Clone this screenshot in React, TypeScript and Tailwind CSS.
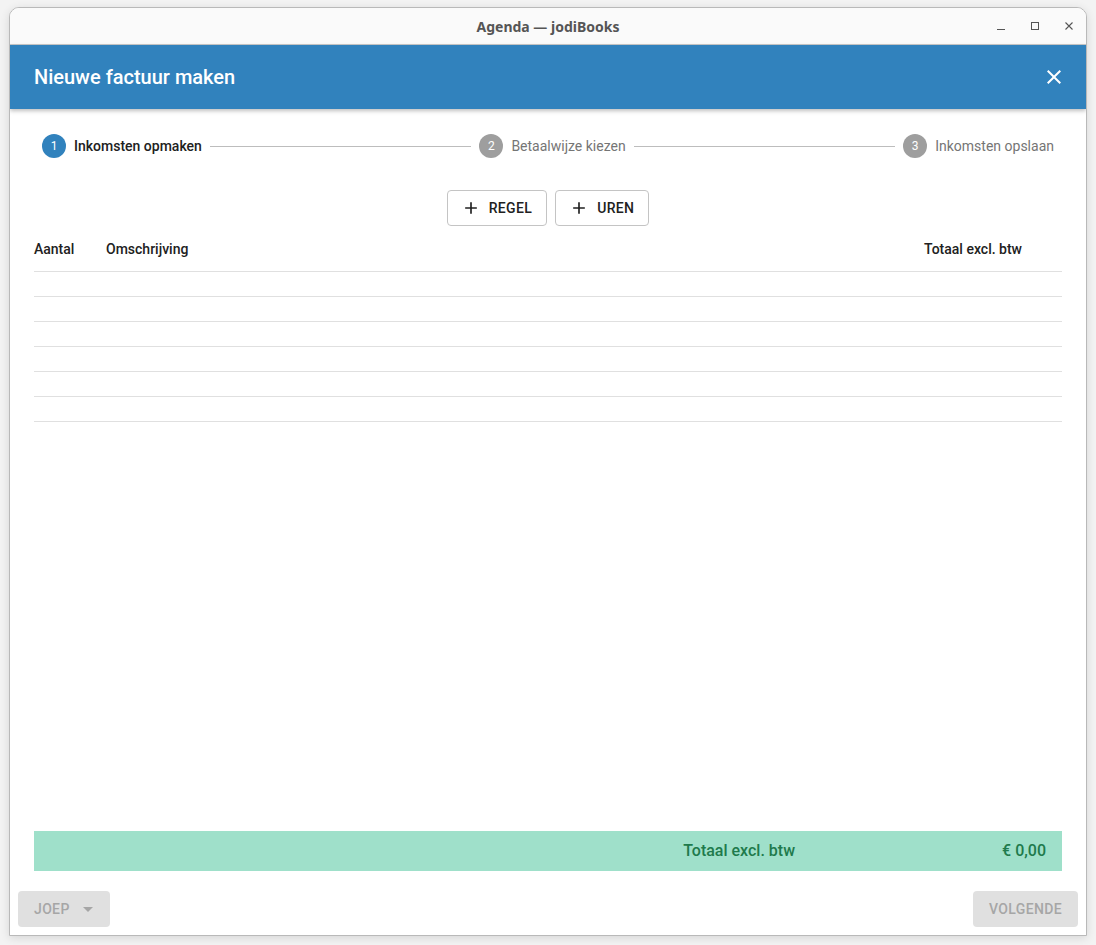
function PlusIcon() {
  return (
    <svg width="20" height="20" viewBox="0 0 24 24" fill="currentColor">
      <path d="M19 13h-6v6h-2v-6H5v-2h6V5h2v6h6v2z" />
    </svg>
  );
}

function CloseIcon() {
  return (
    <svg width="24" height="24" viewBox="0 0 24 24" fill="currentColor">
      <path d="M19 6.41L17.59 5 12 10.59 6.41 5 5 6.41 10.59 12 5 17.59 6.41 19 12 13.41 17.59 19 19 17.59 13.41 12z" />
    </svg>
  );
}

function Step({ n, label, active }: { n: number; label: string; active?: boolean }) {
  return (
    <div className="flex items-center gap-2 px-2">
      <div
        className={
          "flex h-6 w-6 items-center justify-center rounded-full text-xs text-white " +
          (active ? "bg-[#3182bd]" : "bg-[#9e9e9e]")
        }
      >
        {n}
      </div>
      <span className={"text-sm " + (active ? "font-medium text-[#212121]" : "text-[#757575]")}>{label}</span>
    </div>
  );
}

export default function App() {
  const rows = [0, 1, 2, 3, 4, 5];
  return (
    <div className="h-screen w-full bg-[#f3f3f3] pl-[9px] pt-[7px] font-['Roboto',sans-serif]">
      <div className="flex h-[929px] w-[1078px] flex-col overflow-hidden rounded-t-[10px] border border-[#b9b9b9] bg-white shadow-[0_2px_10px_rgba(0,0,0,0.12)]">
        {/* title bar */}
        <div className="relative flex h-[37px] shrink-0 items-center justify-center border-b border-[#c8c8c8] bg-[#fafafa]">
          <span className="font-['Noto_Sans',sans-serif] text-[14px] font-bold text-[#555]">Agenda — jodiBooks</span>
          <div className="absolute right-[12px] top-0 flex h-full items-center gap-[24px] text-[#555]">
            <svg width="10" height="10" viewBox="0 0 10 10"><path d="M1 8.5h8" stroke="currentColor" strokeWidth="1" /></svg>
            <svg width="10" height="10" viewBox="0 0 10 10"><rect x="1.5" y="1.5" width="7" height="7" fill="none" stroke="currentColor" strokeWidth="1" /></svg>
            <svg width="10" height="10" viewBox="0 0 10 10"><path d="M1.5 1.5l7 7M8.5 1.5l-7 7" stroke="currentColor" strokeWidth="1.1" /></svg>
          </div>
        </div>

        {/* dialog header */}
        <div className="relative z-10 flex h-[64px] shrink-0 items-center justify-between bg-[#3182bd] pl-6 pr-[20px] text-white shadow-[0_2px_4px_rgba(0,0,0,0.25)]">
          <h1 className="text-[20px] font-medium">Nieuwe factuur maken</h1>
          <CloseIcon />
        </div>

        {/* body */}
        <div className="flex flex-1 flex-col px-6">
          <div className="flex items-center pt-[25px]">
            <Step n={1} label="Inkomsten opmaken" active />
            <div className="h-px flex-1 bg-[#bdbdbd]" />
            <Step n={2} label="Betaalwijze kiezen" />
            <div className="h-px flex-1 bg-[#bdbdbd]" />
            <Step n={3} label="Inkomsten opslaan" />
          </div>

          <div className="mt-[32px] flex justify-center gap-2">
            <button className="flex h-9 items-center gap-2 rounded border border-[#c4c4c4] pl-[13px] pr-[14px] text-sm font-medium tracking-wide text-[#212121]">
              <PlusIcon />
              REGEL
            </button>
            <button className="flex h-9 items-center gap-2 rounded border border-[#c4c4c4] pl-[13px] pr-[14px] text-sm font-medium tracking-wide text-[#212121]">
              <PlusIcon />
              UREN
            </button>
          </div>

          <div className="flex h-[46px] items-center border-b border-[#e0e0e0] text-sm font-medium text-[#212121]">
            <div className="w-[72px]">Aantal</div>
            <div className="flex-1">Omschrijving</div>
            <div className="pr-10">Totaal excl. btw</div>
          </div>
          {rows.map((r) => (
            <div key={r} className="h-[25px] border-b border-[#e0e0e0]" />
          ))}

          <div className="flex-1" />

          <div className="flex h-10 items-center bg-[#9fe0ca] pr-4 text-base font-medium text-[#207a4c]">
            <div className="flex-1" />
            <span className="mr-[207px]">Totaal excl. btw</span>
            <span>€ 0,00</span>
          </div>
        </div>

        {/* footer */}
        <div className="mt-5 flex shrink-0 items-center justify-between px-2 pb-2">
          <button className="flex h-9 items-center gap-[6px] rounded bg-[#e0e0e0] pl-4 pr-[10px] text-sm font-medium tracking-wide text-[#a6a6a6]">
            JOEP
            <svg width="24" height="24" viewBox="0 0 24 24" fill="currentColor"><path d="M7 10l5 5 5-5z" /></svg>
          </button>
          <button className="flex h-9 items-center rounded bg-[#e0e0e0] px-4 text-sm font-medium tracking-wide text-[#a6a6a6]">
            VOLGENDE
          </button>
        </div>
      </div>
    </div>
  );
}
